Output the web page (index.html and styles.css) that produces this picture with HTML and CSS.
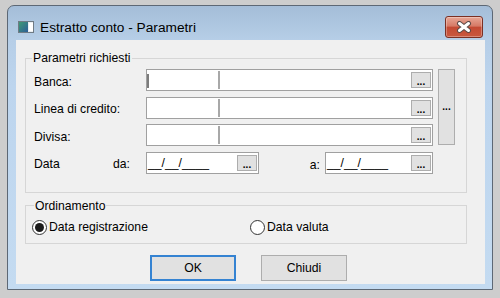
FILE: index.html
```html
<!DOCTYPE html>
<html lang="it">
<head>
    <meta charset="UTF-8">
    <title>Estratto conto - Parametri</title>
    <link rel="stylesheet" href="styles.css">
</head>
<body>
    <div class="window">
        <div class="title-bar">
            <div class="title">
                <svg class="app-icon" width="16" height="12" viewBox="0 0 16 12">
                    <defs>
                        <linearGradient id="iconFill" x1="0" y1="0" x2="1" y2="1">
                            <stop offset="0" stop-color="#3f9a74"/>
                            <stop offset="1" stop-color="#2c5d98"/>
                        </linearGradient>
                    </defs>
                    <rect x="0.5" y="0.5" width="15" height="11" fill="#e9eef2" stroke="#6f7b85"/>
                    <rect x="1" y="1" width="9" height="10" fill="url(#iconFill)"/>
                    <rect x="11" y="2" width="4" height="8" fill="#ffffff"/>
                </svg>
                <span>Estratto conto - Parametri</span>
            </div>
            <button class="close-btn" title="Chiudi">
                <svg width="16" height="12" viewBox="0 0 16 12">
                    <path d="M3.5 2.5 L12.5 9.5 M12.5 2.5 L3.5 9.5" stroke="#5b4a47" stroke-width="5" stroke-linecap="round"/>
                    <path d="M3.5 2.5 L12.5 9.5 M12.5 2.5 L3.5 9.5" stroke="#ffffff" stroke-width="3" stroke-linecap="round"/>
                </svg>
            </button>
        </div>

        <div class="client">
            <!-- Parametri richiesti -->
            <div class="group params">
                <span class="group-title">Parametri richiesti</span>
                <div class="param-grid">
                    <label class="field-label">Banca:</label>
                    <div class="lookup">
                        <span class="code-part"><span class="caret"></span></span>
                        <span class="divider"></span>
                        <span class="desc-part"></span>
                        <button class="dots-btn">...</button>
                    </div>
                    <button class="side-btn">...</button>

                    <label class="field-label">Linea di credito:</label>
                    <div class="lookup">
                        <span class="code-part"></span>
                        <span class="divider"></span>
                        <span class="desc-part"></span>
                        <button class="dots-btn">...</button>
                    </div>

                    <label class="field-label">Divisa:</label>
                    <div class="lookup">
                        <span class="code-part"></span>
                        <span class="divider"></span>
                        <span class="desc-part"></span>
                        <button class="dots-btn">...</button>
                    </div>

                    <div class="field-label date-label">
                        <span>Data</span>
                        <span>da:</span>
                    </div>
                    <div class="date-row">
                        <div class="date-input date-from">
                            <span class="mask">__/__/____</span>
                            <button class="dots-btn">...</button>
                        </div>
                        <span class="to-label">a:</span>
                        <div class="date-input date-to">
                            <span class="mask">__/__/____</span>
                            <button class="dots-btn">...</button>
                        </div>
                    </div>
                </div>
            </div>

            <!-- Ordinamento -->
            <div class="group sort">
                <span class="group-title">Ordinamento</span>
                <div class="radio-row">
                    <label class="radio-item first">
                        <span class="radio-circle checked"></span>
                        <span>Data registrazione</span>
                    </label>
                    <label class="radio-item">
                        <span class="radio-circle"></span>
                        <span>Data valuta</span>
                    </label>
                </div>
            </div>

            <div class="actions">
                <button class="btn default">OK</button>
                <button class="btn">Chiudi</button>
            </div>
        </div>
    </div>
</body>
</html>
```

FILE: styles.css
```css
body {
    margin: 0;
    background-color: #cdcdcd;
    font-family: "Liberation Sans", Arial, sans-serif;
    font-size: 12.2px;
    color: #000;
}

button {
    font-family: inherit;
    font-size: inherit;
    color: #000;
    padding: 0;
}

.window {
    box-sizing: border-box;
    width: 486px;
    height: 285px;
    margin: 5px 0 0 7px;
    border: 1px solid #5d6875;
    border-radius: 7px 7px 0 0;
    background: linear-gradient(#a4bdd8, #b6cee7 34px, #bdd5ee 80px, #c4dbf1);
    display: flex;
    flex-direction: column;
}

.title-bar {
    box-sizing: border-box;
    height: 34px;
    padding: 8px 9px 0 10px;
    display: flex;
    justify-content: space-between;
    align-items: center;
}

.title {
    display: flex;
    align-items: center;
    font-size: 13.7px;
}

.app-icon {
    margin-right: 6px;
}

.close-btn {
    box-sizing: border-box;
    width: 38px;
    height: 22px;
    border: 1px solid #7b3024;
    border-radius: 3px;
    background: linear-gradient(#e8a796, #d67a66 45%, #c44a33 52%, #c9583f);
    box-shadow: inset 0 0 0 1px rgba(255, 255, 255, 0.3);
    display: flex;
    align-items: center;
    justify-content: center;
}

.client {
    flex: 1;
    margin: 0 7px 5px 8px;
    padding: 18px 18px 0 9px;
    background-color: #f0f0f0;
}

.group {
    position: relative;
    border: 1px solid #d6d6d6;
}

.group-title {
    position: absolute;
    top: -8px;
    left: 6px;
    padding: 0 1px;
    line-height: 15px;
    background-color: #f0f0f0;
}

.params {
    padding: 10px 11px 18px 8px;
}

.param-grid {
    display: grid;
    grid-template-columns: 107px 287px 17px;
    grid-auto-rows: 22px;
    column-gap: 5px;
    row-gap: 5.5px;
}

.field-label {
    display: flex;
    align-items: center;
    padding-top: 4px;
    line-height: 15px;
}

.date-label {
    justify-content: space-between;
    padding-right: 11px;
}

.lookup,
.date-input {
    box-sizing: border-box;
    height: 22px;
    border: 1px solid #a0a0a0;
    background-color: #fff;
    display: flex;
    align-items: center;
}

.code-part {
    flex: 0 0 71px;
    height: 20px;
    display: flex;
    align-items: center;
}

.caret {
    width: 2px;
    height: 14px;
    margin-top: 2px;
    background-color: #7c7c7c;
}

.divider {
    width: 2px;
    height: 18px;
    background-color: #a8a8a8;
}

.desc-part {
    flex: 1;
}

.dots-btn {
    box-sizing: border-box;
    width: 20px;
    height: 16px;
    margin-right: 1px;
    border: 1px solid #adadad;
    background-color: #e1e1e1;
    font-size: 10px;
    font-weight: bold;
    line-height: 8px;
    display: flex;
    align-items: flex-end;
    justify-content: center;
    padding-bottom: 1px;
}

.side-btn {
    grid-row: 1 / span 3;
    grid-column: 3;
    box-sizing: border-box;
    height: 76px;
    border: 1px solid #adadad;
    background-color: #e1e1e1;
    font-size: 10px;
    font-weight: bold;
    line-height: 8px;
}

.date-row {
    display: flex;
    align-items: center;
}

.date-input {
    justify-content: space-between;
}

.date-from {
    width: 113px;
    margin-right: auto;
}

.date-to {
    width: 108px;
}

.to-label {
    margin-right: 5px;
    padding-top: 5px;
}

.mask {
    padding-left: 1px;
    line-height: 20px;
}

.date-input .dots-btn {
    margin-right: 1px;
}

.sort {
    margin-top: 12px;
    padding: 14px 0 8px 6px;
}

.sort .group-title {
    top: -7px;
    left: 8px;
}

.radio-row {
    display: flex;
    height: 15px;
}

.radio-item {
    display: flex;
    align-items: center;
    gap: 2px;
}

.radio-item.first {
    width: 218px;
}

.radio-circle {
    box-sizing: border-box;
    width: 15px;
    height: 15px;
    border: 1px solid #333;
    border-radius: 50%;
    background-color: #fff;
    display: flex;
    align-items: center;
    justify-content: center;
}

.radio-circle.checked::after {
    content: "";
    width: 9px;
    height: 9px;
    border-radius: 50%;
    background-color: #1b1b1b;
}

.actions {
    display: flex;
    gap: 25px;
    margin-top: 11px;
    padding-left: 125px;
}

.btn {
    box-sizing: border-box;
    width: 86px;
    height: 26px;
    border: 1px solid #adadad;
    background-color: #e1e1e1;
}

.btn.default {
    border: 2px solid #3583d2;
}
```
